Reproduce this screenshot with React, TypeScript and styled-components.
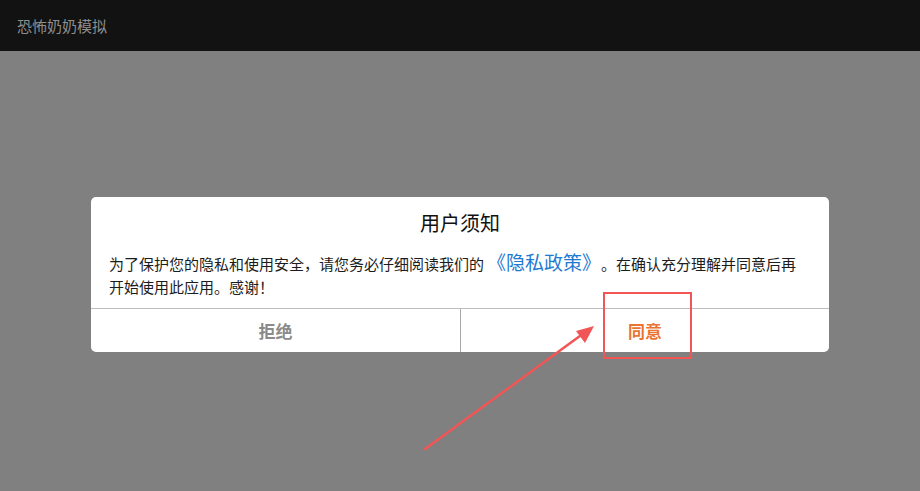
import React from "react";
import styled, { createGlobalStyle } from "styled-components";

const Global = createGlobalStyle`
  html, body { margin: 0; padding: 0; }
  body {
    width: 920px;
    height: 491px;
    overflow: hidden;
    font-family: "Noto Sans CJK SC", "Noto Sans", sans-serif;
    text-spacing-trim: space-all;
  }
`;

const Page = styled.div`
  position: relative;
  width: 920px;
  height: 491px;
  display: flex;
  flex-direction: column;
  background: #808080;
`;

const TopBar = styled.header`
  height: 51px;
  flex: 0 0 51px;
  background: #121212;
  display: flex;
  align-items: center;
  padding: 0 17px;
  box-sizing: border-box;
`;

const AppTitle = styled.span`
  color: #8e8e8e;
  font-size: 15px;
  line-height: 20px;
  margin-top: 1px;
`;

const Main = styled.main`
  flex: 1;
  display: flex;
  align-items: center;
  justify-content: center;
  padding-top: 7px;
`;

const Dialog = styled.div`
  width: 738px;
  background: #ffffff;
  border-radius: 5px;
  overflow: hidden;
  display: flex;
  flex-direction: column;
`;

const Title = styled.h2`
  margin: 0;
  padding-top: 13px;
  font-size: 20px;
  line-height: 26px;
  font-weight: 400;
  color: #111;
  text-align: center;
`;

const Body = styled.p`
  margin: 16px 0 0;
  padding: 0 24px 0 18px;
  font-size: 15px;
  line-height: 23px;
  color: #1c1c1c;
  text-spacing-trim: space-all;
`;

const Link = styled.span`
  font-size: 19px;
  line-height: 1;
  margin-left: 3px;
  color: #1f7ad2;
`;

const Actions = styled.div`
  margin-top: 10px;
  display: grid;
  grid-template-columns: 1fr 1fr;
  border-top: 1px solid #bdbdbd;
  height: 43px;
`;

const ActionButton = styled.button<{ $tone: "muted" | "accent" }>`
  border: none;
  background: transparent;
  font-family: inherit;
  font-size: 17px;
  font-weight: 700;
  padding: 0;
  color: ${(p) => (p.$tone === "accent" ? "#ea7431" : "#8a8a8a")};
  & + & {
    border-left: 1px solid #a8a8a8;
  }
`;

const Annotation = styled.svg`
  position: absolute;
  left: 0;
  top: 0;
  width: 920px;
  height: 491px;
  pointer-events: none;
`;

export default function App() {
  return (
    <>
      <Global />
      <Page>
        <TopBar>
          <AppTitle>恐怖奶奶模拟</AppTitle>
        </TopBar>
        <Main>
          <Dialog>
            <Title>用户须知</Title>
            <Body>
              为了保护您的隐私和使用安全，请您务必仔细阅读我们的<Link>《隐私政策》</Link>。在确认充分理解并同意后再开始使用此应用。感谢！
            </Body>
            <Actions>
              <ActionButton $tone="muted">拒绝</ActionButton>
              <ActionButton $tone="accent">同意</ActionButton>
            </Actions>
          </Dialog>
        </Main>
        <Annotation viewBox="0 0 920 491">
          <rect x="604" y="293" width="87" height="65" fill="none" stroke="#f25555" strokeWidth="2" />
          <line x1="425" y1="449" x2="584" y2="333" stroke="#f25555" strokeWidth="2.5" strokeLinecap="round" />
          <polygon points="594,326 576,331 585,343" fill="#f25555" />
        </Annotation>
      </Page>
    </>
  );
}
